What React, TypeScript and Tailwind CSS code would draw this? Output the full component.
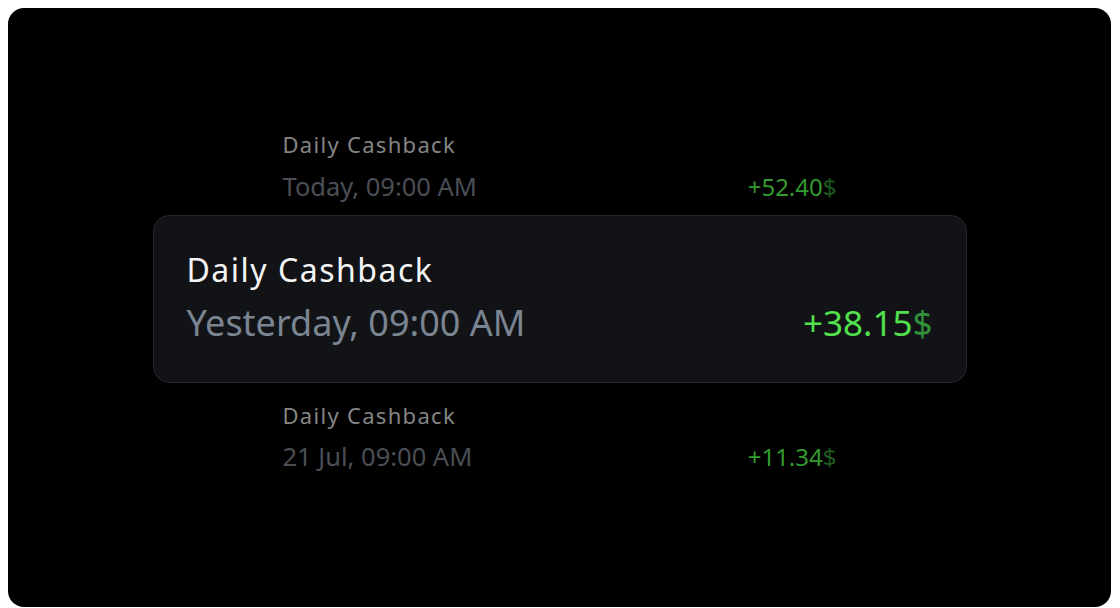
import React from "react";

const font = { fontFamily: '"Noto Sans", "Open Sans", sans-serif' };

function SmallRow({ date, amount, gap }: { date: string; amount: string; gap: string }) {
  return (
    <div className="w-[554px] flex flex-col">
      <div className="text-[22px] leading-[28px] tracking-[1.3px] text-[#858585]">Daily Cashback</div>
      <div className={`${gap} flex items-baseline justify-between`}>
        <span className="text-[25.5px] leading-[32px] text-[#4a4e55]">{date}</span>
        <span className="text-[24px] leading-[32px] text-[#339a2e]">
          {amount}
          <span className="text-[#1f5c1d]">$</span>
        </span>
      </div>
    </div>
  );
}

export default function App() {
  return (
    <div className="w-[1120px] h-[608px] bg-white pl-2 pt-2" style={font}>
      <div className="w-[1103px] h-[599px] bg-black rounded-[16px] flex flex-col items-center pt-[122px]">
        <SmallRow date="Today, 09:00 AM" amount="+52.40" gap="mt-[12px]" />
        <div className="mt-[12px] w-[814px] h-[168px] rounded-[16px] border border-[#23262a] bg-[#111316] px-[33px] pt-[34px] flex flex-col">
          <div className="text-[32px] leading-[40px] tracking-[1.5px] text-[#f4f4f4]">Daily Cashback</div>
          <div className="mt-[11px] flex items-baseline justify-between">
            <span className="text-[36px] leading-[44px] text-[#7b8491]">Yesterday, 09:00 AM</span>
            <span className="text-[35px] leading-[44px] text-[#52e04c]">
              +38.15<span className="text-[#30913a]">$</span>
            </span>
          </div>
        </div>
        <div className="mt-[18px]">
          <SmallRow date="21 Jul, 09:00 AM" amount="+11.34" gap="mt-[11px]" />
        </div>
      </div>
    </div>
  );
}
